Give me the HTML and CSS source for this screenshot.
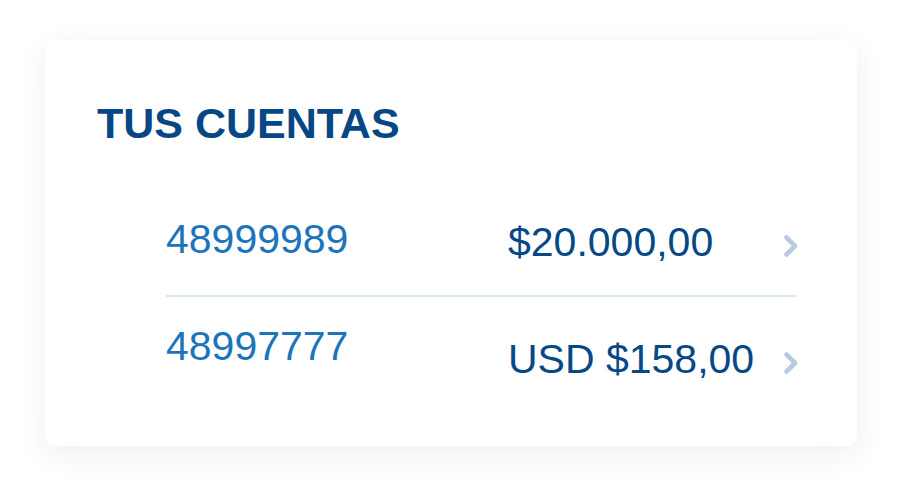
FILE: index.html
```html
<!DOCTYPE html>
<html lang="es">
<head>
<meta charset="utf-8">
<title>Tus cuentas</title>
<link rel="stylesheet" href="styles.css">
</head>
<body>
<section class="card">
  <h2 class="title">TUS CUENTAS</h2>
  <ul class="accounts">
    <li class="account account--first">
      <span class="account-number">48999989</span>
      <span class="account-amount">$20.000,00</span>
      <svg class="chevron" width="16" height="24" viewBox="0 0 16 24"><polyline points="3.5,3.5 12,12 3.5,20.5" fill="none" stroke="#b9cbdd" stroke-width="4.6" stroke-linecap="round" stroke-linejoin="round"/></svg>
    </li>
    <li class="account account--last">
      <span class="account-number">48997777</span>
      <span class="account-amount">USD $158,00</span>
      <svg class="chevron" width="16" height="24" viewBox="0 0 16 24"><polyline points="3.5,3.5 12,12 3.5,20.5" fill="none" stroke="#b9cbdd" stroke-width="4.6" stroke-linecap="round" stroke-linejoin="round"/></svg>
    </li>
  </ul>
</section>
</body>
</html>
```

FILE: styles.css
```css
html, body {
  margin: 0;
  padding: 0;
  background: #ffffff;
}

body {
  box-sizing: border-box;
  min-height: 497px;
  font-family: "Liberation Sans", Arial, Helvetica, sans-serif;
  padding: 40px 45px 51px 45px;
}

.card {
  box-sizing: border-box;
  width: 812px;
  height: 406px;
  background: #ffffff;
  border-radius: 10px;
  box-shadow: 0 8px 30px rgba(30, 40, 100, 0.075);
  padding: 59px 60px 0 52px;
}

.title {
  margin: 0;
  font-size: 43px;
  line-height: 48px;
  font-weight: 700;
  color: #064784;
}

.accounts {
  list-style: none;
  margin: 48px 0 0 69px;
  padding: 0;
}

.account {
  display: grid;
  grid-template-columns: 342px 1fr 16px;
  align-items: start;
  font-size: 41px;
  line-height: 48px;
}

.account--first {
  height: 100px;
  border-bottom: 2px solid #dfe7ef;
}

.account--last {
  height: 100px;
}

.account-number {
  color: #1d74ba;
}

.account-amount {
  color: #074886;
}

.account--first .account-number { margin-top: 20px; }
.account--first .account-amount { margin-top: 23px; }
.account--first .chevron { margin-top: 39px; }

.account--last .account-number { margin-top: 25px; }
.account--last .account-amount { margin-top: 38px; }
.account--last .chevron { margin-top: 54px; }

.chevron {
  display: block;
  margin-left: 2px;
}
```
